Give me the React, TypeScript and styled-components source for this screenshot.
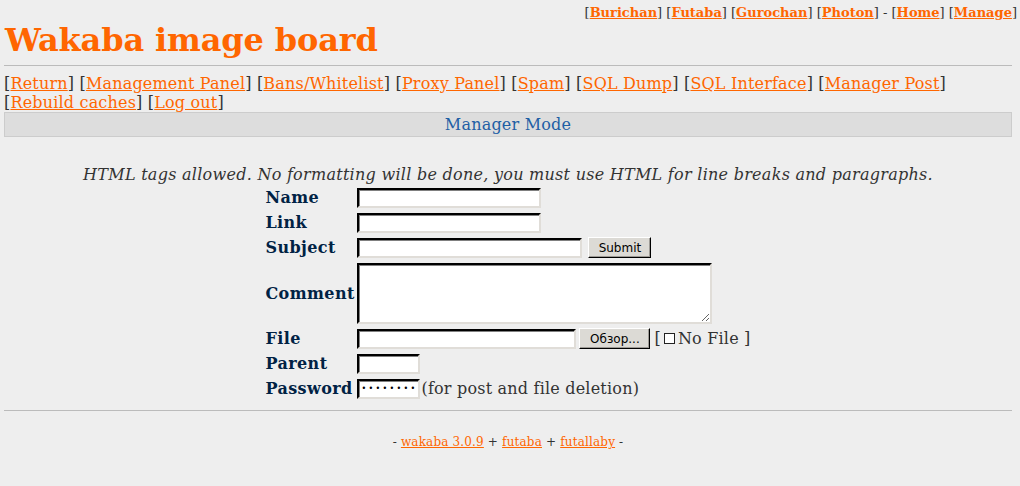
import React from 'react';
import styled, { createGlobalStyle } from 'styled-components';

const GlobalStyle = createGlobalStyle`
  html, body {
    margin: 0;
    background: #eeeeee;
  }
  body {
    padding: 0 8px 0 4px;
    color: #333333;
    font-family: 'DejaVu Serif', serif;
    font-size: 16px;
  }
`;

const styles = ['Burichan', 'Futaba', 'Gurochan', 'Photon'];
const firstRow = [
  'Return',
  'Management Panel',
  'Bans/Whitelist',
  'Proxy Panel',
  'Spam',
  'SQL Dump',
  'SQL Interface',
  'Manager Post',
];
const secondRow = ['Rebuild caches', 'Log out'];

const NavRow = ({ items }: { items: string[] }) => (
  <NavLine>
    {items.map((l, i) => (
      <React.Fragment key={l}>
        [<Link href="#">{l}</Link>]{i < items.length - 1 ? ' ' : ''}
      </React.Fragment>
    ))}
  </NavLine>
);

const App = () => {
  return (
    <>
      <GlobalStyle />
      <AdminBar>
        {styles.map((s) => (
          <React.Fragment key={s}>
            [<BoldLink href="#">{s}</BoldLink>]{' '}
          </React.Fragment>
        ))}
        - [<BoldLink href="#">Home</BoldLink>] [<BoldLink href="#">Manage</BoldLink>]
      </AdminBar>
      <Logo>Wakaba image board</Logo>
      <Rule />
      <nav>
        <NavRow items={firstRow} />
        <NavRow items={secondRow} />
      </nav>
      <ModeHeader>Manager Mode</ModeHeader>
      <Rules>
        HTML tags allowed. No formatting will be done, you must use HTML for line breaks and
        paragraphs.
      </Rules>
      <PostForm>
        <Label>Name</Label>
        <Field>
          <TextInput $width={184} />
        </Field>
        <Label>Link</Label>
        <Field>
          <TextInput $width={184} />
        </Field>
        <Label>Subject</Label>
        <Field>
          <TextInput $width={225} />
          <Button $width={63}>Submit</Button>
        </Field>
        <Label>Comment</Label>
        <Field>
          <CommentBox />
        </Field>
        <Label>File</Label>
        <Field>
          <TextInput $width={219} readOnly />
          <Button $width={71} $gap={3}>
            Обзор...
          </Button>
          <Note>
            [ <CheckBox /> No File ]
          </Note>
        </Field>
        <Label>Parent</Label>
        <Field>
          <TextInput $width={63} />
        </Field>
        <Label>Password</Label>
        <Field>
          <TextInput $width={63} $secret type="password" defaultValue="wakaba12" />
          <Note $tight>(for post and file deletion)</Note>
        </Field>
      </PostForm>
      <Rule $bottom />
      <Footer>
        - <Link href="#">wakaba 3.0.9</Link> + <Link href="#">futaba</Link> +{' '}
        <Link href="#">futallaby</Link> -
      </Footer>
    </>
  );
};

export default App;

const AdminBar = styled.div`
  margin-right: -5px;
  padding-top: 5px;
  text-align: right;
  font-size: 13px;
  line-height: 16px;
`;

const Link = styled.a`
  color: #ff6600;
  text-decoration: underline;
`;

const BoldLink = styled(Link)`
  font-weight: bold;
`;

const Logo = styled.h1`
  margin: 0;
  padding-left: 1px;
  color: #ff6600;
  font-size: 32px;
  line-height: 38px;
  font-weight: bold;
  letter-spacing: -0.15px;
`;

const Rule = styled.hr<{ $bottom?: boolean }>`
  margin: ${({ $bottom }) => ($bottom ? '9px 0 0' : '6px 0 8px')};
  height: 0;
  border: none;
  border-top: 1px solid #bbbbbb;
`;

const NavLine = styled.div`
  line-height: 19px;
  letter-spacing: 0.18px;
  white-space: nowrap;
`;

const ModeHeader = styled.div`
  height: 23px;
  line-height: 24px;
  background: #dddddd;
  border: 1px solid #cccccc;
  color: #1f5fa5;
  text-align: center;
  letter-spacing: 0.2px;
`;

const Rules = styled.p`
  margin: 28px 0 0;
  line-height: 20px;
  font-style: italic;
  letter-spacing: 0.27px;
  text-align: center;
`;

const PostForm = styled.form`
  display: grid;
  grid-template-columns: 92px auto;
  grid-template-rows: repeat(3, 25px) 66px repeat(3, 25px);
  justify-content: center;
`;

const Label = styled.div`
  display: flex;
  align-items: center;
  color: #002244;
  font-weight: bold;
  letter-spacing: 0.4px;
`;

const Field = styled.div`
  display: flex;
  align-items: center;
`;

const TextInput = styled.input<{ $width: number; $secret?: boolean }>`
  box-sizing: border-box;
  width: ${({ $width }) => $width}px;
  height: 20px;
  margin: 0;
  padding: 0 2px;
  background: #ffffff;
  border: 2px inset #e0ddd8;
  border-top-color: #000000;
  border-left-color: #000000;
  box-shadow: inset 1px 1px 0 #808080;
  font-family: 'DejaVu Sans', sans-serif;
  font-size: 8px;
  letter-spacing: ${({ $secret }) => ($secret ? 2.3 : 0)}px;
  outline: none;
`;

const Button = styled.button<{ $width: number; $gap?: number }>`
  box-sizing: border-box;
  width: ${({ $width }) => $width}px;
  height: 21px;
  margin: 0 0 0 ${({ $gap }) => $gap ?? 6}px;
  padding: 0;
  background: #dcdad5;
  border: 1px solid;
  border-color: #ffffff #000000 #000000 #ffffff;
  box-shadow: inset -1px -1px 0 #9d9a95;
  color: #000000;
  font-family: 'DejaVu Sans', sans-serif;
  font-size: 12px;
`;

const CommentBox = styled.textarea`
  box-sizing: border-box;
  width: 355px;
  height: 61px;
  margin: 0;
  background: #ffffff;
  border: 2px inset #e0ddd8;
  border-top-color: #000000;
  border-left-color: #000000;
  box-shadow: inset 1px 1px 0 #808080;
  outline: none;
  resize: both;
`;

const Note = styled.span<{ $tight?: boolean }>`
  display: flex;
  align-items: center;
  margin-left: ${({ $tight }) => ($tight ? 1 : 4)}px;
  color: #333333;
  letter-spacing: 0.2px;
  white-space: nowrap;
`;

const CheckBox = styled.span`
  display: inline-block;
  box-sizing: border-box;
  width: 11px;
  height: 11px;
  margin: 0 3px;
  border: 1px solid #222222;
  background: #ffffff;
`;

const Footer = styled.div`
  margin-top: 24px;
  text-align: center;
  font-size: 12px;
  line-height: 14px;
  letter-spacing: 0.16px;
`;
